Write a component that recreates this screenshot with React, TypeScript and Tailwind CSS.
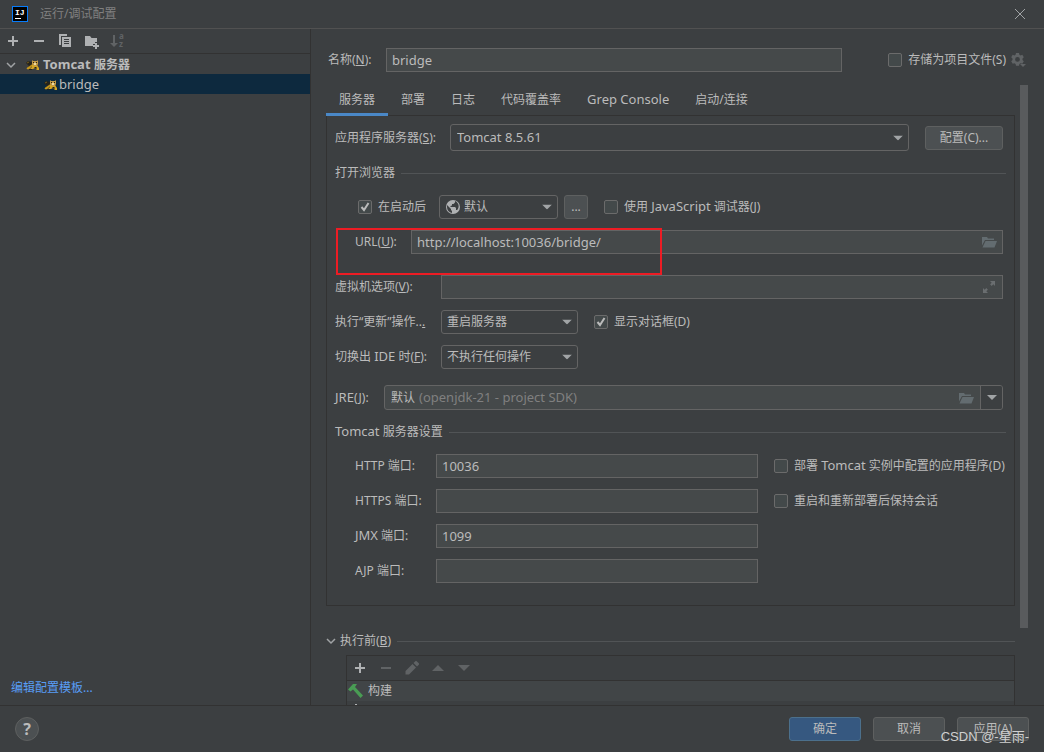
import { useState, type ReactNode } from 'react';

const TABS = ['服务器', '部署', '日志', '代码覆盖率', 'Grep Console', '启动/连接'];

const FIELD =
    'h-6 min-w-0 border border-[#646464] bg-[#45494a] px-[5px] text-[13px] text-[#bbbbbb] outline-none';
const BUTTON =
    'flex h-6 items-center justify-center rounded-[3px] border border-[#5e6060] bg-[#4c5052] text-xs text-[#bbbbbb]';

/* ---------- Icons ---------- */

function Icon({ children, className = '' }: { children: ReactNode; className?: string }) {
    return (
        <svg viewBox="0 0 16 16" className={`h-4 w-4 shrink-0 ${className}`} fill="currentColor" aria-hidden="true">
            {children}
        </svg>
    );
}

const PlusIcon = () => (
    <Icon>
        <path d="M7 3h2v4h4v2H9v4H7V9H3V7h4z" />
    </Icon>
);

const MinusIcon = () => (
    <Icon>
        <path d="M3 7h10v2H3z" />
    </Icon>
);

const CopyIcon = () => (
    <Icon>
        <path d="M2 1h8v2H4v9H2z" />
        <path fillRule="evenodd" d="M5 4h9v10H5zM7 6v1h5V6zM7 8v1h5V8zM7 10v1h5v-1z" />
    </Icon>
);

const FolderPlusIcon = () => (
    <Icon>
        <path d="M2 3h5l1.500 2H14v4h-2v2h-2v2H2z" />
        <path d="M12 10h2v2h2v2h-2v2h-2v-2h-2v-2h2z" />
    </Icon>
);

const SortIcon = () => (
    <Icon className="overflow-visible">
        <path d="M4 2h2v8h3l-4 4-4-4h3z" />
        <text x="10" y="6" fontSize="8" fontWeight="700">
            a
        </text>
        <text x="10" y="14" fontSize="8" fontWeight="700">
            z
        </text>
    </Icon>
);

const ChevronIcon = () => (
    <svg viewBox="0 0 10 10" className="h-[10px] w-[10px] shrink-0" aria-hidden="true">
        <path d="M1 3l4 4 4-4" fill="none" stroke="#a0a3a5" strokeWidth="1.500" />
    </svg>
);

const TomcatIcon = () => (
    <svg viewBox="0 0 14 14" className="h-[14px] w-[14px] shrink-0" aria-hidden="true">
        <path d="M0 5l2-2 4 1 2 3-3 2-3 2H1l2-3z" fill="#26231a" />
        <path d="M1 5l2-1M1 10l3-2 3-2 1 1-3 2-2 2H1z" fill="#c8991c" stroke="#c8991c" strokeWidth="0.500" />
        <path d="M6 7h5l2 3v2h-2L9 10 7 11H4l2-2z" fill="#d5a523" />
        <path d="M6 2l1 1h4l1-1v4l-1 2H8L6 6z" fill="#c49a45" />
        <path d="M7 4h1v1H7zM10 4h1v1h-1zM8 9h2l1 1-1 1zM3 11h3v1H3z" fill="#26231a" />
        <path d="M8 5h2v2H8z" fill="#ead9a4" />
    </svg>
);

const GearIcon = () => (
    <Icon>
        <path
            fillRule="evenodd"
            d="M6 1h3l.4 1.800 1.200.6 1.700-.6 1.500 2.500L12.500 6.600v1.500l1.300 1.200-1.500 2.500-1.700-.5-1.200.7L9 13.700H6l-.4-1.700-1.200-.7-1.700.5L1.200 9.300l1.300-1.200V6.600L1.200 5.300l1.500-2.500 1.700.6 1.200-.6zM7.500 5a2.400 2.400 0 1 0 0 4.800 2.400 2.400 0 0 0 0-4.800z"
        />
        <path d="M10 12h6l-3 3z" />
    </Icon>
);

const GlobeIcon = () => (
    <Icon className="text-[#afb1b3]">
        <circle cx="8" cy="8" r="7" />
        <path
            d="M2 6l4 4v1l1 1v2C4 13.500 2 11 2 8zM10 2v1.500L8.500 5H7v1.500L5.500 7v1H10l1 1v2h1.200C14.500 8.500 14.300 4 10 2z"
            fill="#3c3f41"
        />
    </Icon>
);

const FolderIcon = () => (
    <Icon className="text-[#636c70]">
        <path d="M1 3h5l1 1.500h6V6H4L1 11.500z" />
        <path d="M4.500 7H16l-2.500 6.500H1.500z" />
    </Icon>
);

const ExpandIcon = () => (
    <Icon className="text-[#6a6e70]">
        <path d="M9 2h5v5l-1.700-1.700-1.600 1.600-1.600-1.600 1.600-1.600zM2 9v5h5l-1.700-1.700 1.600-1.600-1.600-1.600-1.600 1.600z" />
    </Icon>
);

const PencilIcon = () => (
    <Icon>
        <path d="M1.500 14.500V11l7-7 3.500 3.500-7 7zM9.500 3l1.800-1.800q.7-.7 1.400 0l2.100 2.100q.7.7 0 1.400L13 6.500z" />
    </Icon>
);

const HammerIcon = () => (
    <Icon className="text-[#499c54]">
        <path d="M0 6.500L5 1h4L7 4l8 8.500-2.500 2.500L5 6.500l-2.500 2z" />
    </Icon>
);

const Arrow = ({ className = '' }: { className?: string }) => (
    <svg viewBox="0 0 10 5" className={`h-[5px] w-[10px] ${className}`} aria-hidden="true">
        <path d="M0 0h10L5 5z" fill="#a1a4a6" />
    </svg>
);

/* ---------- Form parts ---------- */

/* Latin words run one size larger than the Chinese text around them */
function Word({ children }: { children: ReactNode }) {
    return <span className="text-[13px]">{children}</span>;
}

function Check({ label, checked = false }: { label: ReactNode; checked?: boolean }) {
    return (
        <label className="flex h-6 items-center gap-[6px] whitespace-nowrap">
            <span className="relative h-[14px] w-[14px]">
                <input
                    type="checkbox"
                    defaultChecked={checked}
                    className="peer block h-[14px] w-[14px] appearance-none rounded-[2px] border border-[#6b6b6b] bg-[#43494a]"
                />
                <svg
                    viewBox="0 0 14 14"
                    className="pointer-events-none absolute inset-0 hidden h-[14px] w-[14px] peer-checked:block"
                    aria-hidden="true"
                >
                    <path d="M3.500 7l2.500 3 4.500-7" fill="none" stroke="#bbbbbb" strokeWidth="2" />
                </svg>
            </span>
            <span>{label}</span>
        </label>
    );
}

function Select({
    id,
    value,
    icon,
    className,
    size = 'h-6 pl-[5px] text-xs',
}: {
    id: string;
    value: string;
    icon?: ReactNode;
    className: string;
    size?: string;
}) {
    return (
        <div className={`relative ${className}`}>
            {icon && <span className="pointer-events-none absolute top-1 left-[6px]">{icon}</span>}
            <select
                id={id}
                aria-label={value}
                className={`block w-full appearance-none rounded-[3px] border border-[#646464] bg-[#3c3f41] text-[#bbbbbb] outline-none ${size}`}
            >
                <option>{value}</option>
            </select>
            <Arrow className="pointer-events-none absolute top-1/2 right-[6px] -translate-y-1/2" />
        </div>
    );
}

function Section({ children }: { children: ReactNode }) {
    return (
        <div className="flex h-[22px] items-center gap-[6px] whitespace-nowrap">
            <span>{children}</span>
            <span className="h-px flex-1 bg-[#515456]" />
        </div>
    );
}

function PortField({
    id,
    label,
    value,
    children,
}: {
    id: string;
    label: ReactNode;
    value?: string;
    children?: ReactNode;
}) {
    return (
        <div className="grid grid-cols-[101px_1fr_248px] items-center">
            <label htmlFor={id} className="pl-5">
                {label}
            </label>
            <input id={id} defaultValue={value} className={FIELD} />
            <div className="pl-4">{children}</div>
        </div>
    );
}

/* ---------- Page ---------- */

function Sidebar() {
    return (
        <aside className="flex w-[311px] shrink-0 flex-col border-r border-[#323232]">
            <div className="flex h-[25px] shrink-0 items-center gap-[10px] border-b border-[#323232] pl-[5px] text-[#afb1b3]">
                <button aria-label="添加">
                    <PlusIcon />
                </button>
                <button aria-label="移除">
                    <MinusIcon />
                </button>
                <button aria-label="复制">
                    <CopyIcon />
                </button>
                <button aria-label="新建文件夹">
                    <FolderPlusIcon />
                </button>
                <button aria-label="排序" disabled className="text-[#606365]">
                    <SortIcon />
                </button>
            </div>
            <ul className="flex-1">
                <li className="flex h-5 items-center pt-[2px] pl-[6px] text-[13px] font-bold">
                    <ChevronIcon />
                    <span className="ml-[10px]">
                        <TomcatIcon />
                    </span>
                    <span className="ml-[3px]">
                        Tomcat <span className="text-xs">服务器</span>
                    </span>
                </li>
                <li className="flex h-5 items-center gap-px bg-[#0d293e] pt-[2px] pl-11 text-[13px]">
                    <TomcatIcon />
                    bridge
                </li>
            </ul>
            <a href="#templates" className="mb-[9px] pl-[11px] text-[#589df6]">
                编辑配置模板...
            </a>
        </aside>
    );
}

function ServerPanel() {
    return (
        <div className="flex flex-col gap-[11px] border border-[#323232] pt-2 pr-2 pb-[22px] pl-2">
            <div className="flex h-[27px] items-center pr-[3px]">
                <label htmlFor="server" className="w-[115px]">
                    应用程序服务器(<u>S</u>):
                </label>
                <Select id="server" value="Tomcat 8.5.61" className="flex-1" size="h-[27px] pl-[6px] text-[13px]" />
                <button className={`${BUTTON} ml-4 w-[78px]`}>配置(C)...</button>
            </div>

            <Section>打开浏览器</Section>
            <div className="flex items-center pl-[23px]">
                <Check label="在启动后" checked />
                <Select
                    id="browser"
                    value="默认"
                    icon={<GlobeIcon />}
                    className="ml-[13px] w-[119px]"
                    size="h-6 pl-6 text-xs"
                />
                <button className={`${BUTTON} mr-4 ml-[6px] w-6`}>...</button>
                <Check
                    label={
                        <>
                            使用 <Word>JavaScript</Word> 调试器(J)
                        </>
                    }
                />
            </div>
            <div className="relative flex items-center pr-[3px] pl-5">
                <label htmlFor="url" className="w-14">
                    URL(<u>U</u>):
                </label>
                <input id="url" defaultValue="http://localhost:10036/bridge/" className={`${FIELD} flex-1`} />
                <button aria-label="浏览" className="absolute right-[9px]">
                    <FolderIcon />
                </button>
                <span className="pointer-events-none absolute -top-[2px] left-px h-[47px] w-[326px] border-2 border-[#ed1c24]" />
            </div>

            <div className="relative mt-[10px] flex items-center pr-[3px]">
                <label htmlFor="vm" className="w-[106px]">
                    虚拟机选项(<u>V</u>):
                </label>
                <input id="vm" className={`${FIELD} flex-1`} />
                <button aria-label="展开" className="absolute right-[9px]">
                    <ExpandIcon />
                </button>
            </div>
            <div className="flex items-center">
                <label htmlFor="update" className="w-[106px] whitespace-nowrap">
                    执行“更新”操作..<u>.</u>
                </label>
                <Select id="update" value="重启服务器" className="mr-4 w-[137px]" />
                <Check label="显示对话框(D)" checked />
            </div>
            <div className="flex items-center">
                <label htmlFor="frame" className="w-[106px] whitespace-nowrap">
                    切换出 <Word>IDE</Word> 时(<u>F</u>):
                </label>
                <Select id="frame" value="不执行任何操作" className="w-[137px]" />
            </div>

            <div className="mt-[5px] flex items-center pr-[3px]">
                <label htmlFor="jre" className="w-[49px]">
                    <Word>JRE</Word>(<u>J</u>):
                </label>
                <div className="flex h-[25px] flex-1 items-center rounded-[3px] border border-[#646464] bg-[#45494a] pl-[6px]">
                    <input id="jre" defaultValue="默认" className="w-7 text-xs outline-none" />
                    <span className="flex-1 text-[13px] text-[#808080]">(openjdk-21 - project SDK)</span>
                    <button aria-label="浏览 JRE" className="mr-[6px]">
                        <FolderIcon />
                    </button>
                    <button
                        aria-label="选择 JRE"
                        className="flex h-full w-[22px] items-center justify-center rounded-r-[2px] border-l border-[#646464] bg-[#3c3f41]"
                    >
                        <Arrow />
                    </button>
                </div>
            </div>

            <Section>
                <Word>Tomcat</Word> 服务器设置
            </Section>
            <PortField id="http" label="HTTP 端口:" value="10036">
                <Check
                    label={
                        <>
                            部署 <Word>Tomcat</Word> 实例中配置的应用程序(D)
                        </>
                    }
                />
            </PortField>
            <PortField id="https" label="HTTPS 端口:">
                <Check label="重启和重新部署后保持会话" />
            </PortField>
            <PortField
                id="jmx"
                label={
                    <>
                        <Word>JMX</Word> 端口:
                    </>
                }
                value="1099"
            />
            <PortField id="ajp" label="AJP 端口:" />
        </div>
    );
}

function BeforeLaunch() {
    return (
        <div className="mt-6">
            <Section>
                <span className="flex items-center gap-1">
                    <ChevronIcon />
                    <span>
                        执行前(<u>B</u>)
                    </span>
                </span>
            </Section>
            <div className="mt-[3px] ml-5 border border-[#323232]">
                <div className="flex h-[25px] items-center gap-[10px] border-b border-[#323232] pl-[5px] text-[#606365]">
                    <button aria-label="添加任务" className="text-[#afb1b3]">
                        <PlusIcon />
                    </button>
                    <button aria-label="移除任务" disabled>
                        <MinusIcon />
                    </button>
                    <button aria-label="编辑任务" disabled>
                        <PencilIcon />
                    </button>
                    <button aria-label="上移" disabled>
                        <Icon>
                            <path d="M2 11l6-6 6 6z" />
                        </Icon>
                    </button>
                    <button aria-label="下移" disabled>
                        <Icon>
                            <path d="M2 5l6 6 6-6z" />
                        </Icon>
                    </button>
                </div>
                <ul>
                    <li className="flex h-5 items-center gap-1 bg-[#414547] pl-px">
                        <HammerIcon />
                        构建
                    </li>
                    <li className="flex h-5 items-center pl-px text-[#afb1b3]">
                        <Icon>
                            <path d="M7 1h2v3h4v9H3V4h4z" />
                        </Icon>
                    </li>
                </ul>
            </div>
        </div>
    );
}

export default function App() {
    const [activeTab, setActiveTab] = useState(TABS[0]);

    return (
        <div className="flex h-screen flex-col overflow-hidden bg-[#3c3f41] font-['Noto_Sans','Noto_Sans_CJK_SC',sans-serif] text-xs text-[#bbbbbb]">
            {/* Title bar */}
            <header className="flex h-[29px] shrink-0 items-center border-b border-[#515151] pr-[18px] pl-3">
                <svg viewBox="0 0 16 16" className="h-4 w-4" aria-hidden="true">
                    <path d="M0 0h16v16H0z" fill="#087cfa" />
                    <path d="M1 1h14v14H1z" fill="#000" />
                    <text x="3" y="9" fontSize="8" fontWeight="700" fill="#fff" className="font-['Liberation_Mono',monospace]">
                        IJ
                    </text>
                    <path d="M3 12h6v1H3z" fill="#fff" />
                </svg>
                <h1 className="ml-3 flex-1 text-xs text-[#808080]">运行/调试配置</h1>
                <button aria-label="关闭">
                    <svg viewBox="0 0 12 12" className="h-3 w-3" aria-hidden="true">
                        <path d="M1 1l10 10M11 1L1 11" stroke="#a0a3a5" fill="none" />
                    </svg>
                </button>
            </header>

            <div className="flex min-h-0 flex-1">
                <Sidebar />
                <main className="flex min-w-0 flex-1 flex-col pl-[15px]">
                    <div className="flex h-14 shrink-0 items-center pt-[6px] pr-[18px]">
                        <label htmlFor="name" className="w-[60px] pl-[2px]">
                            名称(<u>N</u>):
                        </label>
                        <input id="name" defaultValue="bridge" className={`${FIELD} mr-[46px] flex-1`} />
                        <Check label="存储为项目文件(S)" />
                        <button aria-label="设置" className="ml-1 text-[#606365]">
                            <GearIcon />
                        </button>
                    </div>

                    <div className="flex min-h-0 flex-1">
                        <div className="min-w-0 flex-1 overflow-hidden">
                            <nav className="relative -mb-px flex">
                                {TABS.map((tab) => (
                                    <button
                                        key={tab}
                                        onClick={() => setActiveTab(tab)}
                                        className={`h-[31px] border-b-[3px] px-[13px] pt-[2px] ${
                                            tab === 'Grep Console' ? 'text-[13px]' : ''
                                        } ${activeTab === tab ? 'border-[#4a88c7]' : 'border-transparent'}`}
                                    >
                                        {tab}
                                    </button>
                                ))}
                            </nav>
                            <ServerPanel />
                            <BeforeLaunch />
                        </div>
                        {/* Scrollbar thumb */}
                        <div className="mr-4 ml-[5px] h-7/8 w-2 bg-[#595b5d]" />
                    </div>
                </main>
            </div>

            <footer className="relative flex h-[47px] shrink-0 items-center gap-3 border-t border-[#323232] pr-[15px] pl-[15px]">
                <button
                    aria-label="帮助"
                    className="mr-auto flex h-6 w-6 items-center justify-center rounded-full border border-[#5e6060] bg-[#4c5052] text-base font-bold"
                >
                    ?
                </button>
                <button className="flex h-6 w-[72px] items-center justify-center rounded-[3px] border border-[#4c708c] bg-[#365880]">
                    确定
                </button>
                <button className={`${BUTTON} w-[72px]`}>取消</button>
                <button className={`${BUTTON} w-[72px]`}>应用(A)</button>
                <span className="pointer-events-none absolute right-[15px] bottom-[7px] font-['Liberation_Sans','Noto_Sans_CJK_SC',sans-serif] text-[13px] whitespace-nowrap text-[#d0d0d0]">
                    CSDN @-星雨-
                </span>
            </footer>
        </div>
    );
}
